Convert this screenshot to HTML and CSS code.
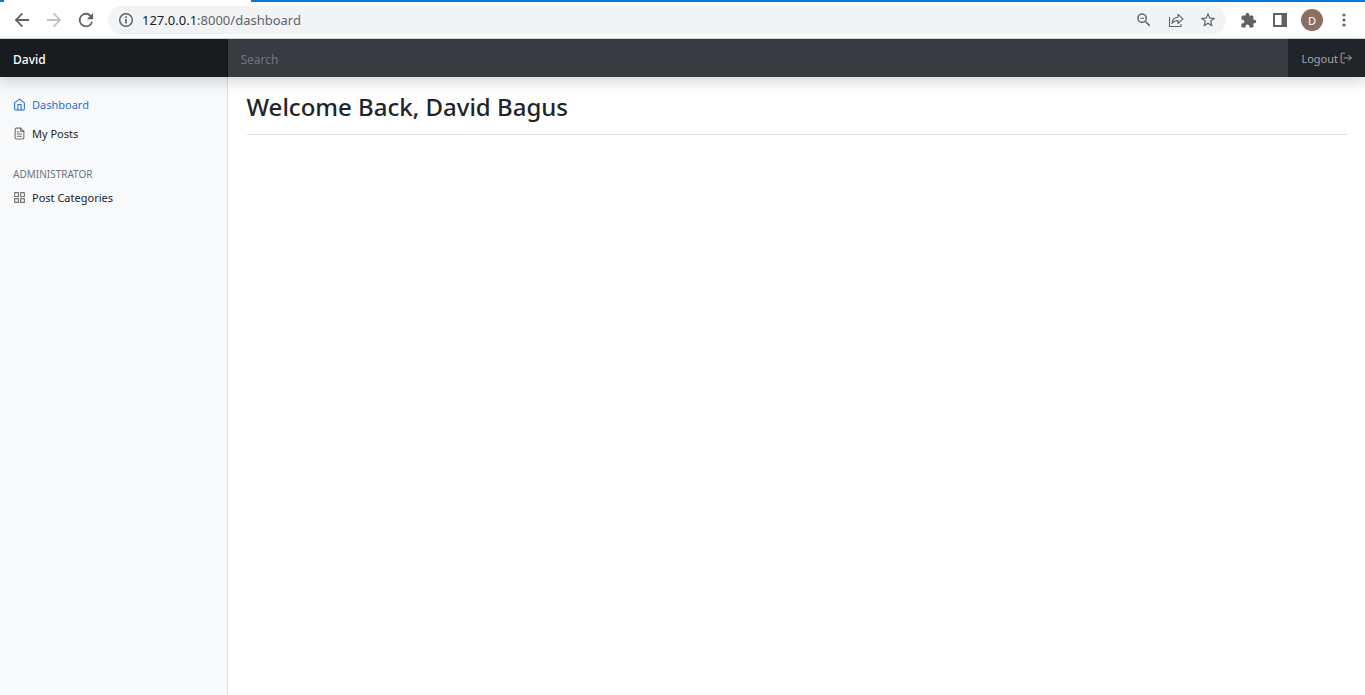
FILE: index.html
```html
<!DOCTYPE html>
<html lang="en">
<head>
<meta charset="utf-8">
<meta name="viewport" content="width=device-width, initial-scale=1">
<title>Dashboard</title>
<link rel="stylesheet" href="styles.css">
</head>
<body>
<div class="browser">
  <div class="tabstrip"><div class="tab"></div></div>
  <div class="toolbar">
    <div class="nav-buttons">
      <button class="tool" type="button" aria-label="Back"><svg width="20" height="20" viewBox="0 0 24 24" fill="#5f6368"><path d="M20.500 10.800H7.300l6-6L11.800 3.400 3.200 12l8.600 8.600 1.500-1.400-6-6h13.200z"/></svg></button>
      <button class="tool" type="button" aria-label="Forward" disabled><svg width="20" height="20" viewBox="0 0 24 24" fill="#bdc1c6"><path d="M3.500 10.800h13.200l-6-6 1.500-1.400 8.600 8.600-8.600 8.600-1.500-1.400 6-6H3.500z"/></svg></button>
      <button class="tool" type="button" aria-label="Reload"><svg width="20" height="20" viewBox="0 0 24 24" fill="#5f6368"><path d="M18.100 5.900A8.600 8.600 0 1 0 20.400 14h-2.300A6.400 6.400 0 1 1 12 5.600c1.760 0 3.300.73 4.450 1.900L13 11h7.500V3.500z"/></svg></button>
    </div>
    <div class="omnibox">
      <button class="tool site-info" type="button" aria-label="Site information"><svg width="16" height="16" viewBox="0 0 16 16" fill="none" stroke="#5f6368"><circle cx="8" cy="8" r="6.300" stroke-width="1.500"/><path d="M8 7v4.500M8 4.200v1.800" stroke-width="1.700"/></svg></button>
      <div class="url">127.0.0.1<span class="url-rest">:8000/dashboard</span></div>
      <div class="omnibox-actions">
        <button class="tool" type="button" aria-label="Zoom"><svg width="18" height="18" viewBox="0 0 24 24" fill="#5f6368"><path d="M15.500 14h-.79l-.28-.27A6.500 6.500 0 1 0 13.730 14.430l.27.280v.79l5 4.990L20.490 19zm-6 0a4.500 4.500 0 1 1 0-9 4.500 4.500 0 0 1 0 9zM7 9h5v1.200H7z"/></svg></button>
        <button class="tool" type="button" aria-label="Share"><svg width="16" height="16" viewBox="0 0 16 16" fill="none" stroke="#5f6368" stroke-width="1.100"><path d="M1.500 5v9.500h11.500v-2.500"/><path d="M4 11.300c.4-4 2.400-5.800 6-6V2.300L15 6.800l-5 4.700V8.600c-2.700 0-4.500.8-6 2.700z" stroke-linejoin="round"/></svg></button>
        <button class="tool" type="button" aria-label="Bookmark"><svg width="18" height="18" viewBox="0 0 24 24" fill="#5f6368"><path d="M22 9.240l-7.190-.62L12 2 9.190 8.630 2 9.240l5.460 4.730L5.820 21 12 17.270 18.180 21l-1.630-7.030zM12 15.400l-3.760 2.270 1-4.280-3.320-2.880 4.380-.38L12 6.100l1.710 4.040 4.380.38-3.320 2.880 1 4.280z"/></svg></button>
      </div>
    </div>
    <div class="browser-actions">
      <button class="tool" type="button" aria-label="Extensions"><svg width="17" height="17" viewBox="0 0 24 24" fill="#5f6368"><path d="M20.500 11H19V7a2 2 0 0 0-2-2h-4V3.500a2.500 2.500 0 0 0-5 0V5H4a2 2 0 0 0-2 2v3.800h1.500a2.700 2.700 0 0 1 0 5.400H2V20c0 1.100.9 2 2 2h3.800v-1.500a2.700 2.700 0 0 1 5.400 0V22H17a2 2 0 0 0 2-2v-4h1.500a2.500 2.500 0 0 0 0-5z"/></svg></button>
      <button class="tool" type="button" aria-label="Side panel"><svg width="16" height="16" viewBox="0 0 16 16"><path d="M1 1h14v14H1zM3 3v10h6.500V3z" fill="#5f6368" fill-rule="evenodd"/></svg></button>
      <button class="tool avatar" type="button" aria-label="Profile">D</button>
      <button class="tool" type="button" aria-label="Menu"><svg width="16" height="16" viewBox="0 0 16 16" fill="#5f6368"><circle cx="8" cy="3" r="1.600"/><circle cx="8" cy="8" r="1.600"/><circle cx="8" cy="13" r="1.600"/></svg></button>
    </div>
  </div>
</div>

<header class="navbar">
  <a class="brand" href="#">David</a>
  <input class="search" type="text" placeholder="Search" aria-label="Search">
  <button class="logout" type="button">Logout
    <svg width="12" height="12" viewBox="0 0 16 16" fill="none" stroke="currentColor" stroke-width="1.300" stroke-linecap="round" stroke-linejoin="round"><path d="M6 1.500H2.500a1 1 0 0 0-1 1v11a1 1 0 0 0 1 1H6M5.500 8h9.500M11.500 4.500L15 8l-3.500 3.500"/></svg>
  </button>
</header>

<div class="layout">
  <nav class="sidebar" aria-label="Main">
    <ul class="menu">
      <li><a class="link active" href="#"><svg class="feather" viewBox="0 0 24 24"><path d="M3 9l9-7 9 7v11a2 2 0 0 1-2 2H5a2 2 0 0 1-2-2z"/><path d="M9 22V12h6v10"/></svg>Dashboard</a></li>
      <li><a class="link" href="#"><svg class="feather" viewBox="0 0 24 24"><path d="M14 2H6a2 2 0 0 0-2 2v16a2 2 0 0 0 2 2h12a2 2 0 0 0 2-2V8z"/><path d="M14 2v6h6M16 13H8M16 17H8M10 9H8"/></svg>My Posts</a></li>
    </ul>
    <h2 class="section-title">Administrator</h2>
    <ul class="menu">
      <li><a class="link" href="#"><svg class="feather" viewBox="0 0 24 24"><path d="M3 3h7v7H3zM14 3h7v7h-7zM14 14h7v7h-7zM3 14h7v7H3z"/></svg>Post Categories</a></li>
    </ul>
  </nav>
  <main class="content">
    <h1 class="title">Welcome Back, David Bagus</h1>
  </main>
</div>
</body>
</html>
```
FILE: styles.css
```css
* { box-sizing: border-box; }

body {
  margin: 0;
  min-height: 100vh;
  display: flex;
  flex-direction: column;
  background: #fff;
  color: #212529;
  font-family: "Segoe UI", "Noto Sans", "Open Sans", sans-serif;
}

button { font-family: inherit; }

/* Browser bar */
.browser { border-bottom: 1px solid #d5d8dc; }

.tabstrip {
  height: 2px;
  padding-left: 4px;
  background: #0078d7;
}

.tab {
  width: 247px;
  height: 2px;
  background: #fff;
}

.toolbar {
  display: flex;
  align-items: center;
  height: 36px;
  padding-right: 10px;
}

.tool {
  display: flex;
  align-items: center;
  justify-content: center;
  width: 22px;
  height: 22px;
  padding: 0;
  border: 0;
  background: none;
}

.nav-buttons {
  display: flex;
  gap: 10px;
  padding: 0 11px;
}

.omnibox {
  flex: 1;
  display: flex;
  align-items: center;
  height: 28px;
  padding: 0 7px;
  border-radius: 14px;
  background: #f1f3f4;
}

.url {
  flex: 1;
  padding-left: 5px;
  color: #202124;
  font-size: 13px;
  line-height: 20px;
}

.url-rest { color: #5f6368; }

.omnibox-actions,
.browser-actions {
  display: flex;
  gap: 10px;
}

.browser-actions { padding-left: 11px; }

.avatar {
  border-radius: 50%;
  background: #8d6e63;
  color: #fff;
  font-size: 11px;
}

/* Site header */
.navbar {
  position: relative;
  display: flex;
  height: 38px;
  background: #212529;
  box-shadow: 0 6px 13px rgba(0, 0, 0, .15);
}

.brand {
  width: 16.667%;
  padding-left: 13px;
  background: #191c1f;
  box-shadow: inset -1px 0 0 rgba(0, 0, 0, .25);
  color: #fff;
  font-size: 12px;
  font-weight: 500;
  line-height: 41px;
  text-decoration: none;
}

.search {
  flex: 1;
  min-width: 0;
  padding: 2px 13px 0;
  border: 0;
  background: #383b3f;
  color: #fff;
  font: inherit;
  font-size: 12px;
}

.search::placeholder {
  color: #6c757d;
  opacity: 1;
}

.logout {
  display: flex;
  align-items: center;
  gap: 2px;
  padding: 0 13px;
  border: 0;
  background: #212529;
  color: #a6a8a9;
  font-size: 11px;
}

/* Page */
.layout {
  flex: 1;
  display: flex;
}

.sidebar {
  width: 16.667%;
  padding-top: 13px;
  border-right: 1px solid #dee2e6;
  background: #f8f9fa;
}

.menu {
  margin: 0;
  padding: 0;
  list-style: none;
}

.link {
  display: flex;
  align-items: center;
  gap: 6px;
  height: 29px;
  padding-left: 13px;
  color: #212529;
  font-size: 11px;
  text-decoration: none;
}

.link.active { color: #2470dc; }

.feather {
  width: 13px;
  height: 13px;
  fill: none;
  stroke: #727272;
  stroke-width: 2;
  stroke-linecap: round;
  stroke-linejoin: round;
}

.active .feather { stroke: #2470dc; }

.section-title {
  margin: 19px 13px 2px;
  color: #6c757d;
  font-size: 10px;
  font-weight: 400;
  line-height: 14px;
  text-transform: uppercase;
}

.content {
  flex: 1;
  padding: 12px 18px 0 19px;
}

.title {
  margin: 0;
  padding-bottom: 10px;
  border-bottom: 1px solid #dee2e6;
  font-size: 24px;
  font-weight: 500;
  line-height: 35px;
}
```
